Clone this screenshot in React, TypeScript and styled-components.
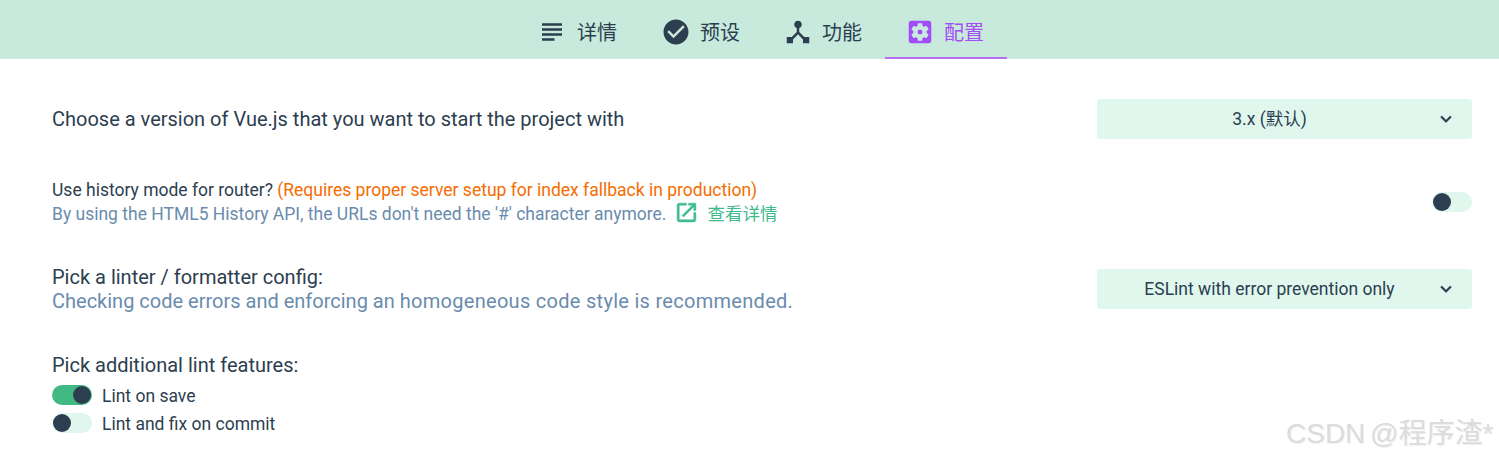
import React from "react";
import styled, { createGlobalStyle } from "styled-components";

const Global = createGlobalStyle`
  html, body { margin: 0; padding: 0; background: #fff; }
  body { font-family: Roboto, "Noto Sans CJK SC", sans-serif; color: #2c3e50; }
`;

const Page = styled.div`
  position: relative;
  width: 1499px;
  height: 460px;
  overflow: hidden;
`;

const TabBar = styled.nav`
  display: flex;
  height: 59px;
  padding-left: 517px;
  background: #c7eadd;
  box-sizing: border-box;
`;

const Tab = styled.div<{ $active?: boolean }>`
  display: flex;
  align-items: center;
  gap: 9px;
  width: 122px;
  box-sizing: border-box;
  padding: 6px 20px 0;
  font-size: 20px;
  color: ${(p) => (p.$active ? "#a44cf6" : "#2c3e50")};
  border-bottom: 2px solid ${(p) => (p.$active ? "#b66ff0" : "transparent")};

  &:first-child {
    width: 124px;
    gap: 10px;
  }
`;

const Icon = styled.svg<{ $size: number }>`
  width: ${(p) => p.$size}px;
  height: ${(p) => p.$size}px;
  flex: none;
  fill: currentColor;
`;

const Body = styled.main`
  display: flex;
  flex-direction: column;
  padding: 40px 27px 0 52px;
`;

const Row = styled.section<{ $mt: number }>`
  display: flex;
  justify-content: space-between;
  align-items: center;
  margin-top: ${(p) => p.$mt}px;
`;

const Info = styled.div`
  display: flex;
  flex-direction: column;
`;

const Title = styled.div`
  font-size: 20px;
  line-height: 24px;
`;

const SmallTitle = styled.div`
  font-size: 17.5px;
  line-height: 24px;
`;

const Warn = styled.span`
  color: #f56c00;
`;

const Desc = styled.div`
  font-size: 20px;
  line-height: 24px;
  color: #6a8bad;
`;

const DescTail = styled.span`
  letter-spacing: 0.29px;
`;

const SmallDesc = styled.div`
  display: flex;
  align-items: center;
  height: 24px;
  font-size: 17.5px;
  line-height: 24px;
  color: #6a8bad;
`;

const DocLink = styled.a`
  display: flex;
  align-items: center;
  gap: 8px;
  margin-left: 8px;
  color: #3dbb8e;
`;

const DocIcon = styled(Icon)`
  margin-bottom: 4px;
  stroke: currentColor;
  stroke-width: 0.5;
`;

const Select = styled.div`
  position: relative;
  display: flex;
  align-items: center;
  justify-content: center;
  width: 375px;
  height: 40px;
  padding-right: 30px;
  box-sizing: border-box;
  border-radius: 3px;
  background: #e0f7ee;
  font-size: 17.5px;
  line-height: 20px;
`;

const Chevron = styled(Icon)`
  position: absolute;
  right: 15px;
  top: 9px;
  stroke: currentColor;
  stroke-width: 0.3;
`;

const Switch = styled.div<{ $on?: boolean }>`
  display: flex;
  justify-content: ${(p) => (p.$on ? "flex-end" : "flex-start")};
  align-items: center;
  width: 40px;
  height: 20px;
  flex: none;
  padding: 0 1px;
  box-sizing: border-box;
  border-radius: 10px;
  background: ${(p) => (p.$on ? "#42b983" : "#e0f7ee")};
`;

const Knob = styled.span`
  width: 18px;
  height: 18px;
  border-radius: 50%;
  background: #2c3e50;
`;

const Features = styled.section`
  display: flex;
  flex-direction: column;
  gap: 8px;
  margin-top: 40px;
`;

const Check = styled.div`
  display: flex;
  align-items: center;
  gap: 10px;
  height: 20px;
  font-size: 17.5px;
  line-height: 20px;
`;

const CheckLabel = styled.span`
  padding-top: 2px;
`;

const Watermark = styled.div`
  position: absolute;
  left: 1286px;
  top: 416px;
  font-family: "Liberation Sans", "Noto Sans CJK SC", sans-serif;
  font-size: 28px;
  line-height: 36px;
  word-spacing: -3px;
  white-space: nowrap;
  color: #dcdcdc;
  text-shadow: 1px 1px 1px #efefef;
`;

const paths = {
  subject: "M14 17H4v2h10v-2zm6-8H4v2h16V9zM4 15h16v-2H4v2zM4 5v2h16V5H4z",
  check:
    "M12 2C6.48 2 2 6.48 2 12s4.48 10 10 10 10-4.48 10-10S17.52 2 12 2zm-2 15l-5-5 1.41-1.41L10 14.17l7.59-7.59L19 8l-9 9z",
  hub: "M17 16l-4-4V8.82C14.16 8.4 15 7.3 15 6c0-1.66-1.34-3-3-3S9 4.34 9 6c0 1.3.84 2.4 2 2.82V12l-4 4H3v5h5v-3.05l4-4.2 4 4.2V21h5v-5h-4z",
  settings:
    "M12 10c-1.1 0-2 .9-2 2s.9 2 2 2 2-.9 2-2-.9-2-2-2zm7-7H5c-1.11 0-2 .9-2 2v14c0 1.1.89 2 2 2h14c1.11 0 2-.9 2-2V5c0-1.1-.89-2-2-2zm-1.75 9c0 .23-.02.46-.05.68l1.48 1.16c.13.11.17.3.08.45l-1.4 2.42c-.09.15-.27.21-.43.15l-1.74-.7c-.36.28-.76.51-1.18.69l-.26 1.85c-.03.17-.18.3-.35.3h-2.8c-.17 0-.32-.13-.35-.29l-.26-1.85c-.43-.18-.82-.41-1.18-.69l-1.74.7c-.16.06-.34 0-.43-.15l-1.4-2.42c-.09-.15-.05-.34.08-.45l1.48-1.16c-.03-.23-.05-.46-.05-.69 0-.23.02-.46.05-.68l-1.48-1.16c-.13-.11-.17-.3-.08-.45l1.4-2.42c.09-.15.27-.21.43-.15l1.74.7c.36-.28.76-.51 1.18-.69l.26-1.85c.03-.17.18-.3.35-.3h2.8c.17 0 .32.13.35.29l.26 1.85c.43.18.82.41 1.18.69l1.74-.7c.16-.06.34 0 .43.15l1.4 2.42c.09.15.05.34-.08.45l-1.48 1.16c.03.23.05.46.05.69z",
  open: "M19 19H5V5h7V3H5c-1.11 0-2 .9-2 2v14c0 1.1.89 2 2 2h14c1.1 0 2-.9 2-2v-7h-2v7zM14 3v2h3.59l-9.83 9.83 1.41 1.41L19 6.41V10h2V3h-7z",
  chevron: "M16.59 8.59L12 13.17 7.41 8.59 6 10l6 6 6-6z",
};

const tabs = [
  { label: "详情", d: paths.subject },
  { label: "预设", d: paths.check },
  { label: "功能", d: paths.hub },
  { label: "配置", d: paths.settings, active: true },
];

export default function App() {
  return (
    <Page>
      <Global />
      <TabBar>
        {tabs.map((t) => (
          <Tab key={t.label} $active={t.active}>
            <Icon $size={30} viewBox="0 0 24 24">
              <path d={t.d} />
            </Icon>
            {t.label}
          </Tab>
        ))}
      </TabBar>
      <Body>
        <Row $mt={0}>
          <Title>Choose a version of Vue.js that you want to start the project with</Title>
          <Select>
            3.x (默认)
            <Chevron $size={22} viewBox="0 0 24 24">
              <path d={paths.chevron} />
            </Chevron>
          </Select>
        </Row>
        <Row $mt={39}>
          <Info>
            <SmallTitle>
              Use history mode for router? <Warn>(Requires proper server setup for index fallback in production)</Warn>
            </SmallTitle>
            <SmallDesc>
              By using the HTML5 History API, the URLs don't need the '#' character anymore.
              <DocLink>
                <DocIcon $size={25} viewBox="0 0 24 24">
                  <path d={paths.open} />
                </DocIcon>
                查看详情
              </DocLink>
            </SmallDesc>
          </Info>
          <Switch>
            <Knob />
          </Switch>
        </Row>
        <Row $mt={39}>
          <Info>
            <Title>Pick a linter / formatter config:</Title>
            <Desc>
              Checking code errors and enforcing an <DescTail>homogeneous code style is recommended.</DescTail>
            </Desc>
          </Info>
          <Select>
            ESLint with error prevention only
            <Chevron $size={22} viewBox="0 0 24 24">
              <path d={paths.chevron} />
            </Chevron>
          </Select>
        </Row>
        <Features>
          <Title>Pick additional lint features:</Title>
          <Check>
            <Switch $on>
              <Knob />
            </Switch>
            <CheckLabel>Lint on save</CheckLabel>
          </Check>
          <Check>
            <Switch>
              <Knob />
            </Switch>
            <CheckLabel>Lint and fix on commit</CheckLabel>
          </Check>
        </Features>
      </Body>
      <Watermark>CSDN @程序渣*</Watermark>
    </Page>
  );
}
